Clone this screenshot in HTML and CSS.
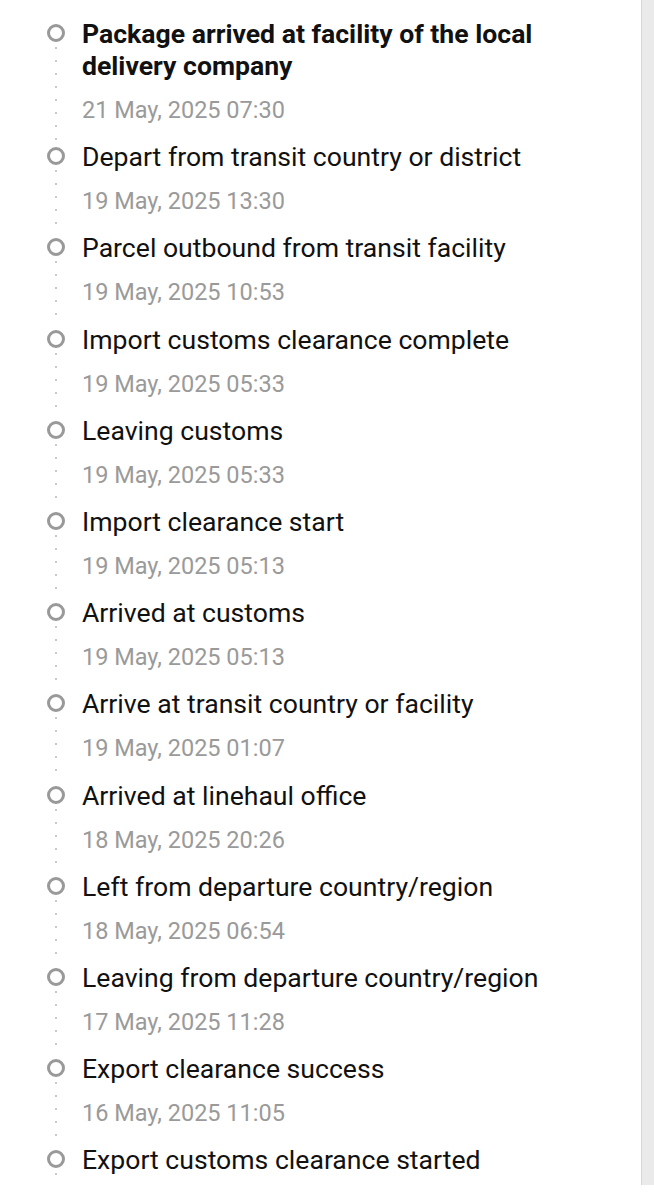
FILE: index.html
```html
<!DOCTYPE html>
<html>
<head>
<meta charset="utf-8">
<link rel="stylesheet" href="styles.css">
</head>
<body>
<div class="page">
  <ul class="timeline">
    <li class="item"><div class="marker"><span class="dot"></span><span class="line"></span></div><div class="content"><div class="title strong">Package arrived at facility of the local delivery company</div><div class="date">21 May, 2025 07:30</div></div></li>
    <li class="item"><div class="marker"><span class="dot"></span><span class="line"></span></div><div class="content"><div class="title">Depart from transit country or district</div><div class="date">19 May, 2025 13:30</div></div></li>
    <li class="item"><div class="marker"><span class="dot"></span><span class="line"></span></div><div class="content"><div class="title">Parcel outbound from transit facility</div><div class="date">19 May, 2025 10:53</div></div></li>
    <li class="item"><div class="marker"><span class="dot"></span><span class="line"></span></div><div class="content"><div class="title">Import customs clearance complete</div><div class="date">19 May, 2025 05:33</div></div></li>
    <li class="item"><div class="marker"><span class="dot"></span><span class="line"></span></div><div class="content"><div class="title">Leaving customs</div><div class="date">19 May, 2025 05:33</div></div></li>
    <li class="item"><div class="marker"><span class="dot"></span><span class="line"></span></div><div class="content"><div class="title">Import clearance start</div><div class="date">19 May, 2025 05:13</div></div></li>
    <li class="item"><div class="marker"><span class="dot"></span><span class="line"></span></div><div class="content"><div class="title">Arrived at customs</div><div class="date">19 May, 2025 05:13</div></div></li>
    <li class="item"><div class="marker"><span class="dot"></span><span class="line"></span></div><div class="content"><div class="title">Arrive at transit country or facility</div><div class="date">19 May, 2025 01:07</div></div></li>
    <li class="item"><div class="marker"><span class="dot"></span><span class="line"></span></div><div class="content"><div class="title">Arrived at linehaul office</div><div class="date">18 May, 2025 20:26</div></div></li>
    <li class="item"><div class="marker"><span class="dot"></span><span class="line"></span></div><div class="content"><div class="title">Left from departure country/region</div><div class="date">18 May, 2025 06:54</div></div></li>
    <li class="item"><div class="marker"><span class="dot"></span><span class="line"></span></div><div class="content"><div class="title">Leaving from departure country/region</div><div class="date">17 May, 2025 11:28</div></div></li>
    <li class="item"><div class="marker"><span class="dot"></span><span class="line"></span></div><div class="content"><div class="title">Export clearance success</div><div class="date">16 May, 2025 11:05</div></div></li>
    <li class="item"><div class="marker"><span class="dot"></span><span class="line"></span></div><div class="content"><div class="title">Export customs clearance started</div></div></li>
  </ul>
  <div class="edge"></div>
</div>
</body>
</html>
```
FILE: styles.css
```css
html, body {
  margin: 0;
  padding: 0;
  background: #ffffff;
}
body {
  font-family: Roboto, "Liberation Sans", Arial, sans-serif;
  overflow: hidden;
}
.page {
  display: flex;
  height: 1185px;
  overflow: hidden;
}
.timeline {
  flex: 1;
  list-style: none;
  margin: 0;
  padding: 18px 40px 0 47px;
}
.item {
  display: grid;
  grid-template-columns: 18px 1fr;
  column-gap: 17px;
}
.marker {
  display: flex;
  flex-direction: column;
  align-items: center;
}
.dot {
  box-sizing: border-box;
  width: 18px;
  height: 18px;
  margin-top: 6px;
  border: 3.5px solid #999999;
  border-radius: 50%;
  flex: none;
}
.line {
  flex: 1;
  width: 2px;
  margin-top: 5px;
  background-image: linear-gradient(#c8c8c8 2px, transparent 2px);
  background-size: 2px 13px;
  background-repeat: repeat-y;
}
.content {
  padding-bottom: 15.2px;
}
.title {
  font-size: 26.6px;
  line-height: 32px;
  color: #111111;
}
.title.strong {
  font-weight: 700;
}
.date {
  margin-top: 12px;
  font-size: 23.5px;
  line-height: 32px;
  color: #9a9a9a;
}
.edge {
  width: 12px;
  flex: none;
  border-left: 1px solid #d7d7d7;
  background: #eaeaea;
}
```
